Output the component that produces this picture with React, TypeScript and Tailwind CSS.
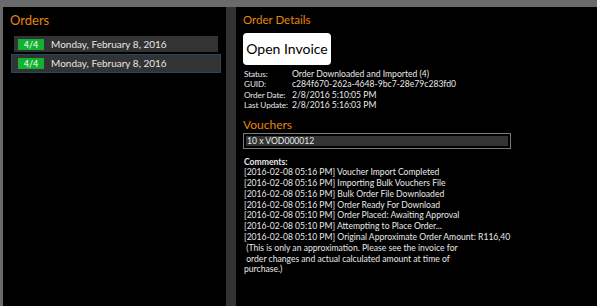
const comments = [
  "[2016-02-08 05:16 PM] Voucher Import Completed",
  "[2016-02-08 05:16 PM] Importing Bulk Vouchers File",
  "[2016-02-08 05:16 PM] Bulk Order File Downloaded",
  "[2016-02-08 05:16 PM] Order Ready For Download",
  "[2016-02-08 05:10 PM] Order Placed: Awaiting Approval",
  "[2016-02-08 05:10 PM] Attempting to Place Order...",
  "[2016-02-08 05:10 PM] Original Approximate Order Amount: R116,40",
  " (This is only an approximation. Please see the invoice for",
  " order changes and actual calculated amount at time of",
  "purchase.)",
];

const details = [
  ["Status:", "Order Downloaded and Imported (4)"],
  ["GUID:", "c284f670-262a-4648-9bc7-28e79c283fd0"],
  ["Order Date:", "2/8/2016 5:10:05 PM"],
  ["Last Update:", "2/8/2016 5:16:03 PM"],
];

function OrderRow({ selected }: { selected?: boolean }) {
  return (
    <div
      className={
        selected
          ? "flex items-center h-[19px] ml-[8px] mr-[5px] px-[6px] bg-[#333333] border border-[#1f4a66]"
          : "flex items-center h-[16px] ml-[11px] mr-[8px] px-[4px] bg-[#333333]"
      }
    >
      <div className="w-[26px] h-[11px] bg-[#12b131] text-white text-[9px] leading-[11px] text-center">4/4</div>
      <div className="ml-[7px] text-[#e6e6e6] text-[10px] whitespace-nowrap">Monday, February 8, 2016</div>
    </div>
  );
}

export default function App() {
  return (
    <div
      className="w-[597px] h-[306px] bg-[#6a6a6a] pt-[7px] pl-[3px] overflow-hidden"
      style={{ fontFamily: 'Lato, "Open Sans", sans-serif' }}
    >
      <div className="flex h-full bg-black">
        {/* orders list */}
        <div className="w-[223px] flex flex-col">
          <div className="text-[#e8860c] text-[13px] leading-none mt-[7px] ml-[7px]">Orders</div>
          <div className="flex flex-col gap-[2px] mt-[9px]">
            <OrderRow />
            <OrderRow selected />
          </div>
        </div>

        {/* splitter */}
        <div className="w-[10px] bg-[#333333]" />

        {/* details */}
        <div className="flex-1 flex flex-col items-start pl-[7px] text-[#e8e8e8] text-[8.6px]">
          <div className="text-[#e8860c] text-[11.5px] leading-none mt-[7px]">Order Details</div>
          <button className="mt-[7px] shrink-0 w-[88px] h-[32px] bg-white rounded-[4px] text-black text-[14px] leading-none whitespace-nowrap">
            Open Invoice
          </button>
          <div className="mt-[4px] ml-[1px] flex flex-col leading-[10.5px]">
            {details.map(([k, v]) => (
              <div key={k} className="flex whitespace-nowrap">
                <div className="w-[48px] shrink-0 text-[8.2px] tracking-[-0.1px]">{k}</div>
                <div>{v}</div>
              </div>
            ))}
          </div>
          <div className="text-[#e8860c] text-[12px] leading-none mt-[8px]">Vouchers</div>
          <div className="mt-[2px] w-[268px] h-[16px] border border-[#7a7a7a] p-[2px]">
            <div className="h-full bg-[#333333] pl-[1px] text-[8.6px] leading-[10px]">10 x VOD000012</div>
          </div>
          <div className="mt-[8px] ml-[1px] leading-[10.8px] whitespace-pre">
            <div className="font-bold">Comments:</div>
            {comments.map((c) => (
              <div key={c}>{c}</div>
            ))}
          </div>
        </div>
      </div>
    </div>
  );
}
